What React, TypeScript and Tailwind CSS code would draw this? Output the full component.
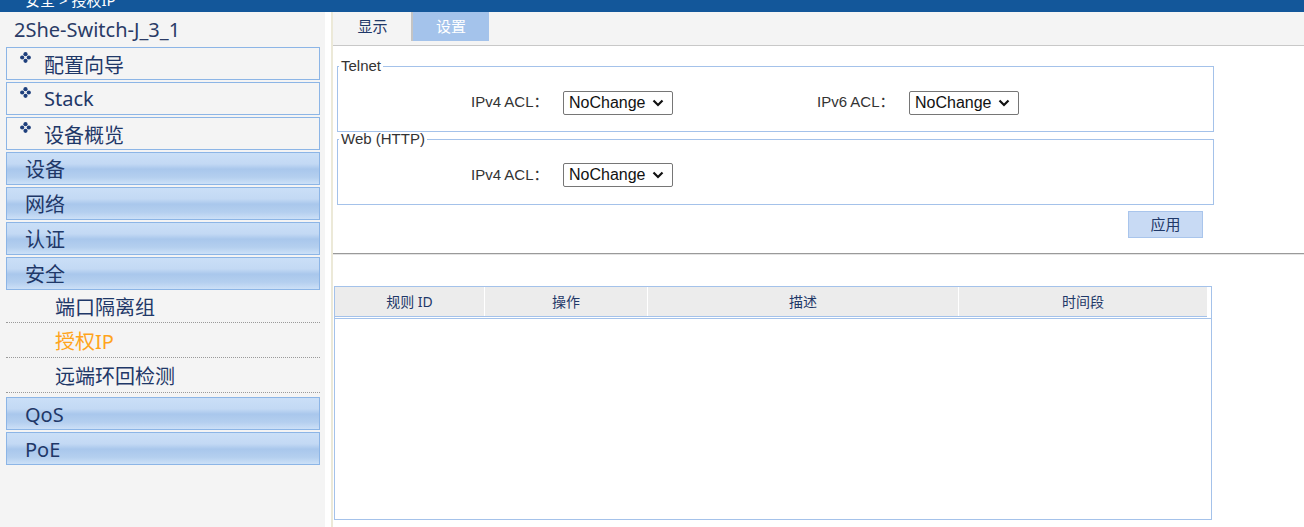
import React from "react";

const Diamond = () => (
  <svg width="11" height="11" viewBox="0 0 11 11" className="shrink-0 mt-[4px]">
    <circle cx="5.5" cy="2.2" r="2.1" fill="#1e3f7c" />
    <circle cx="2.2" cy="5.5" r="2.1" fill="#1e3f7c" />
    <circle cx="8.8" cy="5.5" r="2.1" fill="#1e3f7c" />
    <circle cx="5.5" cy="8.8" r="2.1" fill="#1e3f7c" />
  </svg>
);

const Chevron = () => (
  <svg width="12" height="8" viewBox="0 0 12 8" className="shrink-0">
    <polyline points="1.5,1.5 6,6 10.5,1.5" fill="none" stroke="#111" strokeWidth="2.2" />
  </svg>
);

const Select = () => (
  <div className="w-[110px] h-[24px] border border-[#767676] rounded-[2px] bg-white flex items-center justify-between pl-[5px] pr-[8px] text-[16px] text-[#111] leading-none">
    <span>NoChange</span>
    <Chevron />
  </div>
);

const gradBox =
  "h-[33px] border border-[#8cb5e6] bg-[linear-gradient(to_bottom,#cadff7_0%,#c3d9f4_35%,#a9c7ec_52%,#b4cfef_78%,#cce0f7_100%)] flex items-center pl-[18px] pt-[3px]";

const plainBox =
  "h-[33px] border border-[#8cb5e6] bg-[#f4f4f4] flex items-start pl-[13px] gap-[13px]";

export default function App() {
  return (
    <div className="w-[1304px] h-[527px] overflow-hidden flex flex-col bg-white">
      {/* top bar */}
      <div className="h-[12px] bg-[#13579a] overflow-hidden shrink-0">
        <div className="pl-[25px] -mt-[8px] leading-[16px] text-[15px] text-white font-['Noto_Sans','Noto_Sans_CJK_SC',sans-serif]">
          安全 &gt; 授权IP
        </div>
      </div>

      <div className="flex flex-1 min-h-0">
        {/* sidebar */}
        <div className="w-[325px] bg-[#f4f4f4] shrink-0 font-['Noto_Sans','Noto_Sans_CJK_SC',sans-serif] text-[20px] text-[#1f3868]">
          <div className="h-[35px] flex items-center pl-[14px] pt-[1px] text-[#2a3b66]">2She-Switch-J_3_1</div>
          <div className="ml-[6px] w-[314px] flex flex-col">
            <div className={plainBox}>
              <Diamond />
              <span className="leading-[30px] mt-[3px]">配置向导</span>
            </div>
            <div className={plainBox + " mt-[2px]"}>
              <Diamond />
              <span className="leading-[30px] mt-[1px]">Stack</span>
            </div>
            <div className={plainBox + " mt-[2px]"}>
              <Diamond />
              <span className="leading-[30px] mt-[3px]">设备概览</span>
            </div>
            <div className={gradBox + " mt-[2px]"}>设备</div>
            <div className={gradBox + " mt-[2px]"}>网络</div>
            <div className={gradBox + " mt-[2px]"}>认证</div>
            <div className={gradBox + " mt-[2px]"}>安全</div>
            <div className="h-[33px] border-b border-dotted border-[#9a9a9a] flex items-center pl-[49px] pt-[3px]">端口隔离组</div>
            <div className="h-[35px] border-b border-dotted border-[#9a9a9a] flex items-center pl-[49px] pt-[3px] text-[#ffa41c]">授权IP</div>
            <div className="h-[35px] border-b border-dotted border-[#9a9a9a] flex items-center pl-[49px] pt-[3px]">远端环回检测</div>
            <div className={gradBox + " mt-[4px]"}>QoS</div>
            <div className={gradBox + " mt-[2px]"}>PoE</div>
          </div>
        </div>

        <div className="w-[6px] bg-white shrink-0" />
        <div className="w-[2px] bg-[#ece9d8] shrink-0" />

        {/* main */}
        <div className="flex-1 flex flex-col font-['Liberation_Sans','Noto_Sans_CJK_SC',sans-serif] text-[#333]">
          {/* tabs */}
          <div className="h-[34px] bg-[#f4f4f4] border-b border-[#c8c8c8] flex items-start pl-[1px] shrink-0">
            <div className="w-[79px] h-[29px] border-r-2 border-[#c4c4c4] flex items-center justify-center text-[15px] text-[#1f3868] font-['Noto_Sans','Noto_Sans_CJK_SC',sans-serif]">
              显示
            </div>
            <div className="w-[76px] h-[29px] bg-[#a4c3eb] flex items-center justify-center text-[15px] text-white font-['Noto_Sans','Noto_Sans_CJK_SC',sans-serif]">
              设置
            </div>
          </div>

          <div className="pl-[4px] w-[881px]">
            {/* Telnet */}
            <fieldset className="mt-[12px] w-[877px] border border-[#a4c2ea]">
              <legend className="ml-[1px] px-[2px] text-[15px] leading-[16px] text-[#333]">Telnet</legend>
              <div className="h-[57px] flex items-center pl-[133px] text-[15px]">
                <span className="w-[92px]">IPv4 ACL：</span>
                <Select />
                <span className="w-[144px]" />
                <span className="w-[92px]">IPv6 ACL：</span>
                <Select />
              </div>
            </fieldset>

            {/* Web */}
            <fieldset className="w-[877px] border border-[#a4c2ea]">
              <legend className="ml-[1px] px-[2px] text-[15px] leading-[14px] text-[#333]">Web (HTTP)</legend>
              <div className="h-[58px] flex items-center pl-[133px] text-[15px]">
                <span className="w-[92px]">IPv4 ACL：</span>
                <Select />
              </div>
            </fieldset>

            <div className="w-[877px] flex justify-end pr-[11px] mt-[6px]">
              <div className="w-[75px] h-[27px] bg-[#c8daf4] border border-[#a9c5ec] flex items-center justify-center text-[15px] text-[#1f3868] font-['Noto_Sans','Noto_Sans_CJK_SC',sans-serif]">
                应用
              </div>
            </div>
          </div>

          {/* separator */}
          <div className="mt-[15px] h-[1px] bg-[#9a9a9a]" />
          <div className="h-[1px] bg-[#e4e4e4]" />

          {/* table */}
          <div className="mt-[31px] ml-[1px] w-[878px] h-[234px] border border-[#a4c2ea] flex flex-col text-[14px] text-[#1f3868] font-['Noto_Sans','Noto_Sans_CJK_SC',sans-serif]">
            <div className="w-[872px] h-[30px] border-b border-[#a4c2ea] bg-[#ececec] flex shrink-0">
              <div className="w-[149px] flex items-center justify-center">规则 ID</div>
              <div className="w-[1px] bg-white" />
              <div className="w-[162px] flex items-center justify-center">操作</div>
              <div className="w-[1px] bg-white" />
              <div className="w-[310px] flex items-center justify-center">描述</div>
              <div className="w-[1px] bg-white" />
              <div className="w-[248px] flex items-center justify-center">时间段</div>
            </div>
            <div className="h-[1px] bg-white shrink-0" />
            <div className="h-[1px] bg-[#a4c2ea] shrink-0" />
            <div className="flex-1 bg-white" />
          </div>
        </div>
      </div>
    </div>
  );
}
